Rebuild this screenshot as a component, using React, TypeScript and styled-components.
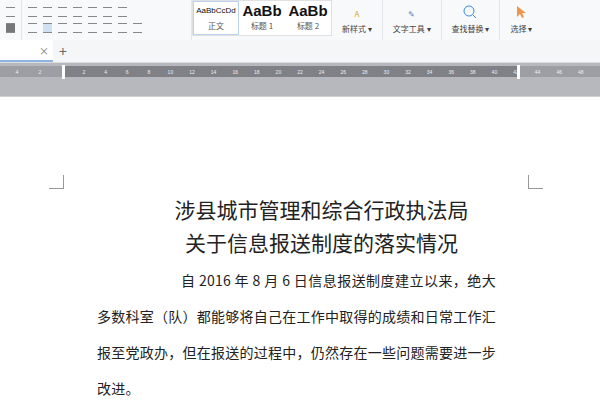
import React from 'react';
import styled, { createGlobalStyle } from 'styled-components';

const Global = createGlobalStyle`
  body { margin: 0; font-family: "Noto Sans CJK SC", "Liberation Sans", sans-serif; }
`;

const Screen = styled.div`
  width: 600px;
  height: 400px;
  overflow: hidden;
  background: #fff;
  display: flex;
  flex-direction: column;
`;

const Toolbar = styled.div`
  height: 40px;
  flex: none;
  background: #f8f9fb;
  display: flex;
  align-items: stretch;
  font-size: 8px;
  color: #555;
`;

const Group = styled.div<{ $w: number }>`
  width: ${p => p.$w}px;
  border-right: 1px solid #e2e4e8;
  display: flex;
  flex-direction: column;
  justify-content: center;
  gap: 6px;
  padding: 0 6px;
  box-sizing: border-box;
`;

const IconRow = styled.div`
  display: flex;
  gap: 6px;
  align-items: center;
`;

const Ico = styled.span<{ $on?: boolean }>`
  width: 9px;
  height: 8px;
  background: ${p => (p.$on ? '#cfe0f5' : 'transparent')};
  border-top: 1px solid #888;
  border-bottom: 1px solid #888;
`;

const Styles = styled.div`
  display: flex;
  margin: 0 0 4px 0;
  align-self: flex-end;
  height: 34px;
  border: 1px solid #e0e0e0;
  background: #fff;
`;

const StyleBox = styled.div<{ $sel?: boolean }>`
  width: 44px;
  display: flex;
  flex-direction: column;
  align-items: center;
  justify-content: space-between;
  padding: 0 0 3px;
  border: ${p => (p.$sel ? '1px solid #bcd3ef' : '1px solid transparent')};
  overflow: hidden;
  white-space: nowrap;
`;

const Sample = styled.span<{ $big?: boolean }>`
  font-family: "Liberation Sans", sans-serif;
  font-weight: ${p => (p.$big ? 700 : 400)};
  font-size: ${p => (p.$big ? '15px' : '8px')};
  color: #111;
  line-height: 18px;
`;

const ToolBtn = styled.div`
  display: flex;
  flex-direction: column;
  align-items: center;
  justify-content: flex-end;
  padding: 0 10px 6px;
  gap: 4px;
  border-right: 1px solid #e2e4e8;
  font-size: 8px;
  color: #444;
`;

const TabBar = styled.div`
  height: 22px;
  flex: none;
  background: #f5f6f8;
  display: flex;
  align-items: center;
`;

const Tab = styled.div`
  width: 53px;
  height: 100%;
  background: #fff;
  border-bottom: 2px solid #8fb4e3;
  box-sizing: border-box;
  display: flex;
  justify-content: flex-end;
  align-items: center;
  padding-right: 4px;
  color: #777;
  font-size: 10px;
`;

const Plus = styled.span`
  margin-left: 6px;
  font-size: 14px;
  color: #666;
`;

const RulerArea = styled.div`
  height: 35px;
  flex: none;
  background: #b6b8bd;
  border-top: 1px solid #ddd;
  border-bottom: 1px solid #d0d0d0;
  padding-top: 3px;
  box-sizing: border-box;
`;

const Ruler = styled.div`
  height: 11px;
  background: #9c9ea3;
  position: relative;
  font-family: "Liberation Sans", sans-serif;
  font-size: 5px;
  color: #eee;
`;

const RulerActive = styled.div`
  position: absolute;
  left: 63px;
  width: 455px;
  top: 0;
  bottom: 0;
  background: #7f8187;
`;

const Tick = styled.span`
  position: absolute;
  top: 3px;
  transform: translateX(-50%);
`;

const Marker = styled.span`
  position: absolute;
  width: 3px;
  height: 14px;
  top: -1px;
  background: #fff;
`;

const Page = styled.div`
  flex: 1;
  background: #fff;
  position: relative;
  padding: 96px 104px 0 97px;
  font-family: "Noto Sans CJK SC", sans-serif;
  color: #222;
`;

const Corner = styled.span<{ $right?: boolean }>`
  position: absolute;
  top: 78px;
  ${p => (p.$right ? 'left: 528px;' : 'left: 49px;')}
  width: 14px;
  height: 13px;
  ${p =>
    p.$right
      ? 'border-left: 1px solid #999;border-bottom: 1px solid #999;'
      : 'border-right: 1px solid #999;border-bottom: 1px solid #999;'}
`;

const Title = styled.div`
  text-align: center;
  font-size: 21px;
  line-height: 33px;
  margin-left: 40px;
  margin-right: -10px;
  white-space: nowrap;
`;

const Para = styled.p`
  margin: 3px 0 0;
  font-size: 14px;
  line-height: 36px;
  text-indent: 6em;
  letter-spacing: 0.2px;
  text-align: justify;
`;

const Heading = styled.div`
  font-size: 14px;
  font-weight: 700;
  line-height: 36px;
`;

const rulerNums: [string, number][] = [
  ['4', 17], ['2', 40],
  ...Array.from({ length: 24 }, (_, i) => [String((i + 1) * 2), 84 + i * 21.6] as [string, number]),
];

export default function App() {
  return (
    <Screen>
      <Global />
      <Toolbar>
        <Group $w={22}>
          <IconRow><Ico /></IconRow>
          <IconRow><Ico style={{ background: '#777' }} /></IconRow>
        </Group>
        <Group $w={170}>
          <IconRow><Ico /><Ico /><Ico /><Ico /><Ico /><Ico /><Ico /></IconRow>
          <IconRow><Ico /><Ico $on /><Ico /><Ico /><Ico /><Ico /><Ico /><Ico /></IconRow>
        </Group>
        <Styles>
          <StyleBox $sel><Sample>AaBbCcDd</Sample>正文</StyleBox>
          <StyleBox><Sample $big>AaBb</Sample>标题 1</StyleBox>
          <StyleBox><Sample $big>AaBb</Sample>标题 2</StyleBox>
        </Styles>
        <ToolBtn><span style={{ color: '#d9a520' }}>A</span>新样式 ▾</ToolBtn>
        <ToolBtn><span style={{ color: '#5a7fc0' }}>✎</span>文字工具 ▾</ToolBtn>
        <ToolBtn>
          <svg width="14" height="14" viewBox="0 0 14 14"><circle cx="6" cy="6" r="5" fill="none" stroke="#3a8ad6" /><path d="M10 10l3 3" stroke="#3a8ad6" /></svg>
          查找替换 ▾
        </ToolBtn>
        <ToolBtn style={{ borderRight: 'none' }}>
          <svg width="10" height="14" viewBox="0 0 10 14"><path d="M1 1v11l3-3 2 4 2-1-2-4h4z" fill="#f0954a" /></svg>
          选择 ▾
        </ToolBtn>
      </Toolbar>
      <TabBar>
        <Tab>×</Tab>
        <Plus>+</Plus>
      </TabBar>
      <RulerArea>
        <Ruler>
          <RulerActive />
          {rulerNums.map(([n, x]) => (
            <Tick key={n + x} style={{ left: x }}>{n}</Tick>
          ))}
          <Marker style={{ left: 62 }} />
          <Marker style={{ left: 517 }} />
        </Ruler>
      </RulerArea>
      <Page>
        <Corner />
        <Corner $right />
        <Title>涉县城市管理和综合行政执法局</Title>
        <Title>关于信息报送制度的落实情况</Title>
        <Para>
          自 2016 年 8 月 6 日信息报送制度建立以来，绝大多数科室（队）都能够将自己在工作中取得的成绩和日常工作汇报至党政办，但在报送的过程中，仍然存在一些问题需要进一步改进。
        </Para>
        <Heading>一、信息报送频率</Heading>
      </Page>
    </Screen>
  );
}
